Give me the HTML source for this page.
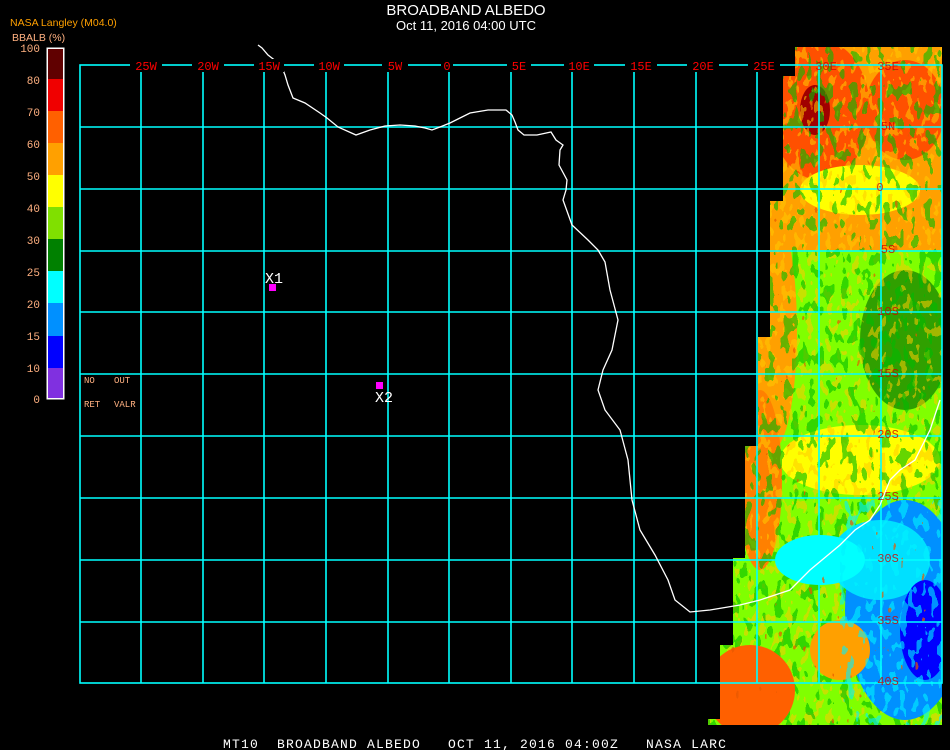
<!DOCTYPE html>
<html><head><meta charset="utf-8"><style>
html,body{margin:0;padding:0;background:#000;}
body{width:950px;height:750px;overflow:hidden;position:relative;font-family:"Liberation Mono","DejaVu Sans Mono",monospace;}
</style></head><body>
<svg width="950" height="750" style="position:absolute;left:0;top:0">
<defs>
<clipPath id="dc"><polygon points="795,47 942,47 942,725 708,725 708,719 720,719 720,645 733,645 733,558 745,558 745,446 758,446 758,337 770,337 770,201 783,201 783,76 795,76"/></clipPath>
<filter id="n1" x="0" y="0" width="100%" height="100%">
<feTurbulence type="fractalNoise" baseFrequency="0.12 0.06" numOctaves="2" seed="3"/>
<feComponentTransfer><feFuncA type="discrete" tableValues="0 0 0 1 1"/></feComponentTransfer>
<feColorMatrix type="matrix" values="0 0 0 0 0  0 0 0 0 0.5  0 0 0 0 0  0 0 0 1 0"/>
</filter>
<filter id="n2" x="0" y="0" width="100%" height="100%">
<feTurbulence type="fractalNoise" baseFrequency="0.15 0.08" numOctaves="2" seed="7"/>
<feComponentTransfer><feFuncA type="discrete" tableValues="0 0 0 1 1"/></feComponentTransfer>
<feColorMatrix type="matrix" values="0 0 0 0 1  0 0 0 0 0.6  0 0 0 0 0  0 0 0 1 0"/>
</filter>
<filter id="n3" x="0" y="0" width="100%" height="100%">
<feTurbulence type="fractalNoise" baseFrequency="0.14 0.07" numOctaves="2" seed="11"/>
<feComponentTransfer><feFuncA type="discrete" tableValues="0 0 0 0 1"/></feComponentTransfer>
<feColorMatrix type="matrix" values="0 0 0 0 0.8  0 0 0 0 0.1  0 0 0 0 0  0 0 0 1 0"/>
</filter>
<filter id="n4" x="0" y="0" width="100%" height="100%">
<feTurbulence type="fractalNoise" baseFrequency="0.13 0.07" numOctaves="2" seed="21"/>
<feComponentTransfer><feFuncA type="discrete" tableValues="0 0 0 1 1"/></feComponentTransfer>
<feColorMatrix type="matrix" values="0 0 0 0 0  0 0 0 0 0.9  0 0 0 0 1  0 0 0 1 0"/>
</filter>
</defs>
<g clip-path="url(#dc)">
<rect x="700" y="40" width="250" height="700" fill="#80ff00"/>
<rect x="700" y="40" width="250" height="210" fill="#ffa000"/>
<ellipse cx="820" cy="110" rx="50" ry="70" fill="#ff5000"/>
<ellipse cx="905" cy="110" rx="40" ry="50" fill="#ff5000"/>
<ellipse cx="815" cy="110" rx="15" ry="25" fill="#a00000"/>
<ellipse cx="860" cy="190" rx="60" ry="25" fill="#ffff00"/>
<rect x="700" y="250" width="250" height="190" fill="#80ff00"/>
<ellipse cx="772" cy="330" rx="25" ry="120" fill="#ffa000"/>
<ellipse cx="905" cy="340" rx="45" ry="70" fill="#30a000"/>
<ellipse cx="760" cy="480" rx="22" ry="90" fill="#ff8000"/>
<ellipse cx="860" cy="460" rx="80" ry="35" fill="#ffff00"/>
<rect x="700" y="40" width="250" height="700" fill="#000" filter="url(#n2)" opacity="0.55"/>
<rect x="700" y="40" width="250" height="700" fill="#000" filter="url(#n1)" opacity="0.6"/>
<ellipse cx="905" cy="610" rx="60" ry="110" fill="#0090ff"/>
<ellipse cx="880" cy="560" rx="50" ry="40" fill="#00e0ff"/>
<ellipse cx="925" cy="630" rx="25" ry="50" fill="#0000ff"/>
<ellipse cx="820" cy="560" rx="45" ry="25" fill="#00ffff"/>
<ellipse cx="750" cy="690" rx="45" ry="45" fill="#ff6000"/>
<ellipse cx="840" cy="650" rx="30" ry="30" fill="#ffa000"/>
<rect x="840" y="500" width="110" height="230" fill="#000" filter="url(#n4)" opacity="0.6"/>
<rect x="700" y="40" width="250" height="700" fill="#000" filter="url(#n3)" opacity="0.7"/>
</g>
<g stroke="#00ffff" stroke-width="1.6" fill="none">
<rect x="80" y="65" width="862" height="618"/>
<path d="M141,65V683M203,65V683M264,65V683M326,65V683M388,65V683M449,65V683M511,65V683M572,65V683M634,65V683M696,65V683M757,65V683M819,65V683M881,65V683"/>
<path d="M80,127H942M80,189H942M80,251H942M80,312H942M80,374H942M80,436H942M80,498H942M80,560H942M80,622H942"/>
</g>
<path fill="none" stroke="#fff" stroke-width="1.3" d="M258,45 L262,48 268,55 281,65 285,75 288,85 293,98 305,103 320,113 327,118 338,127 356,135 370,130 385,126 400,125 415,126 425,128 432,130 440,127 450,123 462,117 470,113 488,110 506,110 512,115 515,122 518,130 524,135 537,135 551,132 556,140 563,145 560,150 559,165 567,180 566,190 563,200 572,225 588,240 598,250 605,262 610,290 618,320 612,350 603,370 598,390 605,410 620,430 628,460 632,500 640,530 655,555 668,580 675,600 690,612 710,610 740,605 760,600 790,590 810,570 840,545 855,530 870,520 880,505 890,480 900,470 915,460 930,430 940,400"/>
<g fill="#000">
<rect x="130" y="59" width="32" height="13"/><rect x="192" y="59" width="32" height="13"/><rect x="254" y="59" width="30" height="13"/><rect x="314" y="59" width="30" height="13"/><rect x="382" y="59" width="26" height="13"/><rect x="441" y="59" width="12" height="13"/><rect x="507" y="59" width="24" height="13"/><rect x="564" y="59" width="30" height="13"/><rect x="625" y="59" width="32" height="13"/><rect x="687" y="59" width="32" height="13"/><rect x="748" y="59" width="32" height="13"/>
</g>
<g fill="#ff0000" font-family="Liberation Mono,monospace" font-size="12" text-anchor="middle">
<text x="146" y="70">25W</text><text x="208" y="70">20W</text><text x="269" y="70">15W</text><text x="329" y="70">10W</text><text x="395" y="70">5W</text><text x="447" y="70">0</text><text x="519" y="70">5E</text><text x="579" y="70">10E</text><text x="641" y="70">15E</text><text x="703" y="70">20E</text><text x="764" y="70">25E</text>
</g>
<g fill="#d00000" font-family="Liberation Mono,monospace" font-size="12" text-anchor="middle" opacity="0.8">
<text x="826" y="70">30E</text><text x="888" y="70">35E</text>
<text x="888" y="130">5N</text><text x="880" y="191">0</text><text x="888" y="253">5S</text><text x="888" y="315">10S</text><text x="888" y="377">15S</text><text x="888" y="438">20S</text><text x="888" y="500">25S</text><text x="888" y="562">30S</text><text x="888" y="624">35S</text><text x="888" y="685">40S</text>
</g>
<rect x="269" y="284" width="7" height="7" fill="#ff00ff"/>
<rect x="376" y="382" width="7" height="7" fill="#ff00ff"/>
<g fill="#fff" font-family="Liberation Mono,monospace" font-size="15">
<text x="265" y="283">X1</text><text x="375" y="402">X2</text>
</g>
<rect x="46.5" y="47.5" width="18" height="352" fill="#fff"/>
<g>
<rect x="48" y="49" width="15" height="30" fill="#600000"/>
<rect x="48" y="79" width="15" height="32" fill="#f00000"/>
<rect x="48" y="111" width="15" height="32" fill="#ff6000"/>
<rect x="48" y="143" width="15" height="32" fill="#ffa000"/>
<rect x="48" y="175" width="15" height="32" fill="#ffff00"/>
<rect x="48" y="207" width="15" height="32" fill="#80e000"/>
<rect x="48" y="239" width="15" height="32" fill="#008000"/>
<rect x="48" y="271" width="15" height="32" fill="#00ffff"/>
<rect x="48" y="303" width="15" height="33" fill="#0090ff"/>
<rect x="48" y="336" width="15" height="32" fill="#0000ff"/>
<rect x="48" y="368" width="15" height="30" fill="#8030e0"/>
</g>
<g fill="#ffb080" font-family="Liberation Mono,monospace" font-size="11" text-anchor="end">
<text x="40" y="52">100</text><text x="40" y="84">80</text><text x="40" y="116">70</text><text x="40" y="148">60</text><text x="40" y="180">50</text><text x="40" y="212">40</text><text x="40" y="244">30</text><text x="40" y="276">25</text><text x="40" y="308">20</text><text x="40" y="340">15</text><text x="40" y="372">10</text><text x="40" y="403">0</text>
</g>
<g fill="#ffb080" font-family="Liberation Mono,monospace" font-size="9">
<text x="84" y="383">NO</text><text x="114" y="383">OUT</text><text x="84" y="407">RET</text><text x="114" y="407">VALR</text>
</g>
<text x="10" y="26" fill="#ffa000" font-family="Liberation Sans,sans-serif" font-size="10.5">NASA Langley (M04.0)</text>
<text x="12" y="41" fill="#ffb080" font-family="Liberation Sans,sans-serif" font-size="10.5">BBALB (%)</text>
<text x="466" y="15" fill="#fff" font-family="Liberation Sans,sans-serif" font-size="15" text-anchor="middle">BROADBAND ALBEDO</text>
<text x="466" y="30" fill="#fff" font-family="Liberation Sans,sans-serif" font-size="13" text-anchor="middle">Oct 11, 2016 04:00 UTC</text>
<text x="223" y="748" fill="#fff" font-family="Liberation Mono,monospace" font-size="13" letter-spacing="1.2" xml:space="preserve" style="white-space:pre">MT10  BROADBAND ALBEDO   OCT 11, 2016 04:00Z   NASA LARC</text>
</svg>
</body></html>
